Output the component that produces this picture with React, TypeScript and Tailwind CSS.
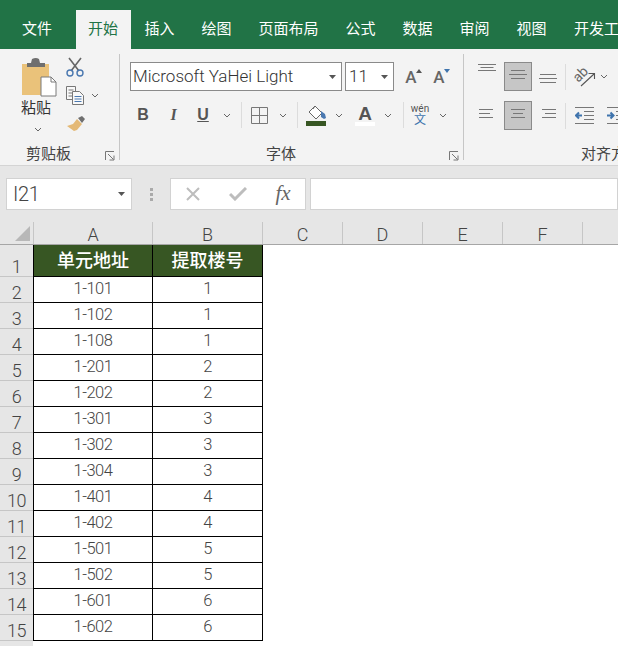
const font = { fontFamily: 'Roboto, "Noto Sans CJK SC", sans-serif' }

const rows = [
  ['1-101', '1'],
  ['1-102', '1'],
  ['1-108', '1'],
  ['1-201', '2'],
  ['1-202', '2'],
  ['1-301', '3'],
  ['1-302', '3'],
  ['1-304', '3'],
  ['1-401', '4'],
  ['1-402', '4'],
  ['1-501', '5'],
  ['1-502', '5'],
  ['1-601', '6'],
  ['1-602', '6'],
]

const tabs = [
  { label: '插入', w: 'w-[57px]' },
  { label: '绘图', w: 'w-[57px]' },
  { label: '页面布局', w: 'w-[87px]' },
  { label: '公式', w: 'w-[57px]' },
  { label: '数据', w: 'w-[57px]' },
  { label: '审阅', w: 'w-[57px]' },
  { label: '视图', w: 'w-[57px]' },
]

function Chevron() {
  return (
    <svg width="8" height="5" viewBox="0 0 8 5" fill="none" stroke="#666" strokeWidth="1" className="shrink-0">
      <path d="M1 1l3 3 3-3" />
    </svg>
  )
}

function Caret() {
  return (
    <svg width="7" height="4" viewBox="0 0 7 4" fill="#555">
      <path d="M0 0h7L3.5 4z" />
    </svg>
  )
}

function Launcher() {
  return (
    <svg width="10" height="10" viewBox="0 0 10 10" fill="none" stroke="#777" strokeWidth="1">
      <path d="M.5 9V.5H9" />
      <path d="M3 3l5.5 5.5M9 4.5v4.5H4.5" />
    </svg>
  )
}

function Cell({ w, children }: { w: string; children?: React.ReactNode }) {
  return <div className={`${w} h-full shrink-0 flex items-center justify-center`}>{children}</div>
}

function Sep() {
  return <div className="w-px h-[26px] shrink-0 bg-[#dcdcdc]" />
}

function AlignLines({ widths, side, gap = 4 }: { widths: number[]; side: 'left' | 'center' | 'right'; gap?: number }) {
  const total = 20
  return (
    <svg width="20" height="13" viewBox="0 0 20 13" stroke="#777" strokeWidth="1">
      {widths.map((w, i) => {
        const x = side === 'left' ? 2 : side === 'right' ? total - w - 2 : (total - w) / 2
        return <path key={i} d={`M${x} ${i * gap + 0.5}h${w}`} />
      })}
    </svg>
  )
}

function Paste() {
  return (
    <svg width="36" height="40" viewBox="0 0 36 40">
      <path d="M0 6h27v31H0z" fill="#eac27a" />
      <path d="M5 5h4l1-4q4-2 7 0l1 4h5v4H5z" fill="#6f6f6f" />
      <path d="M19 19h10l5 5v14H19z" fill="#fff" stroke="#7a7a7a" />
      <path d="M29 19v5h5" fill="none" stroke="#7a7a7a" />
    </svg>
  )
}

function Scissors() {
  return (
    <svg width="18" height="20" viewBox="0 0 18 20" fill="none">
      <path d="M3 1l10 13M15 1L5 14" stroke="#666" strokeWidth="1.6" />
      <circle cx="4" cy="16" r="3" stroke="#4a78b0" strokeWidth="1.4" />
      <circle cx="14" cy="16" r="3" stroke="#4a78b0" strokeWidth="1.4" />
    </svg>
  )
}

function Copy() {
  return (
    <svg width="18" height="19" viewBox="0 0 18 19" fill="#f8f8f8" stroke="#777" strokeWidth="1">
      <path d="M.5.5h9v13h-9z" />
      <path d="M2.5 4h5M2.5 7h5M2.5 10h5" />
      <path d="M6.5 5.5h7l4 4v9h-11z" />
      <path d="M8.5 10.5h7M8.5 13h7M8.5 15.5h7" stroke="#4a78b0" />
    </svg>
  )
}

function Brush() {
  return (
    <svg width="18" height="15" viewBox="0 0 18 15">
      <path d="M11 2l4-2 3 3-3 4z" fill="#6f6f6f" />
      <path d="M10 3l5 5-5 6-3 1-7-5 3-1 3-1z" fill="#e4b976" />
    </svg>
  )
}

function Borders() {
  return (
    <svg width="17" height="17" viewBox="0 0 17 17" fill="none" stroke="#777" strokeWidth="1">
      <path d="M.5.5h16v16H.5zM8.5.5v16M.5 8.5h16" />
    </svg>
  )
}

function FillColor() {
  return (
    <svg width="21" height="21" viewBox="0 0 21 21">
      <path d="M9 1l7 7-6 6-7-7z" fill="#fff" stroke="#666" />
      <path d="M9 1L7 4" stroke="#666" fill="none" />
      <path d="M15 6l4 3 1 4-2 1-3-2z" fill="#4a78b0" />
      <path d="M0 16h20v5H0z" fill="#375623" />
    </svg>
  )
}

function Orientation() {
  return (
    <svg width="22" height="22" viewBox="0 0 22 22" fill="none" className="ml-[2px]">
      <text x="0" y="13" fontSize="14" fill="#666" transform="rotate(-45 7 10)">ab</text>
      <path d="M7 20L20 8M14.5 7.5h6V13" stroke="#555" strokeWidth="1.1" />
    </svg>
  )
}

function Indent({ flip }: { flip?: boolean }) {
  return (
    <svg width="19" height="17" viewBox="0 0 19 17" fill="none" stroke="#777" strokeWidth="1" className="shrink-0">
      <path d="M0 .5h19M9 4.5h10M9 8.5h10M9 12.5h10M0 16.5h19" />
      {flip ? (
        <path d="M0 8.5h6M3.5 5.5l3 3-3 3" stroke="#3f74ad" strokeWidth="2" />
      ) : (
        <path d="M7 8.5H1M4 5.5l-3 3 3 3" stroke="#3f74ad" strokeWidth="2" />
      )}
    </svg>
  )
}

function RibbonGroup({ w, label, labelClass, launcher, children }: {
  w: string
  label: string
  labelClass: string
  launcher?: boolean
  children: React.ReactNode
}) {
  return (
    <section className={`${w} shrink-0 flex flex-col`}>
      <div className="flex-1 min-h-0">{children}</div>
      <div className="h-[20px] flex items-center relative text-[15px] text-[#444] whitespace-nowrap">
        <span className={labelClass}>{label}</span>
        {launcher && (
          <span className="absolute right-[4px] top-[7px] flex">
            <Launcher />
          </span>
        )}
      </div>
    </section>
  )
}

function SmallA({ up }: { up?: boolean }) {
  return (
    <span className="relative text-[17px] leading-[20px] text-[#666] font-medium">
      A
      <svg width="6" height="4" viewBox="0 0 6 4" className="absolute -right-[5px] top-[2px]" fill={up ? '#555' : '#3f74ad'}>
        <path d={up ? 'M3 0l3 4H0z' : 'M0 0h6L3 4z'} />
      </svg>
    </span>
  )
}

export default function App() {
  return (
    <div className="w-[618px] h-[646px] overflow-hidden bg-white flex flex-col" style={font}>
      {/* Tabs */}
      <div className="h-[49px] shrink-0 bg-[#217346] flex items-end text-[15px] text-white whitespace-nowrap">
        <div className="h-[39px] pl-[22px] w-[76px] shrink-0 flex items-center">文件</div>
        <div className="h-[39px] w-[55px] shrink-0 pl-[12px] bg-[#f3f3f3] text-[#217346] flex items-center">开始</div>
        {tabs.map((tab) => (
          <div key={tab.label} className={`${tab.w} h-[39px] shrink-0 flex items-center justify-center`}>
            {tab.label}
          </div>
        ))}
        <div className="h-[39px] pl-[14px] shrink-0 flex items-center">开发工具</div>
      </div>

      {/* Ribbon */}
      <div className="h-[117px] shrink-0 bg-[#f3f3f3] border-b border-[#d4d4d4] flex pt-[5px] pb-[1px]">
        <RibbonGroup w="w-[119px]" label="剪贴板" labelClass="ml-[26px]" launcher>
          <div className="flex h-full">
            <div className="w-[63px] pl-[22px] pt-[4px] flex flex-col">
              <Paste />
              <span className="w-[36px] -ml-[4px] text-[15px] leading-[20px] text-[#333] text-center">粘贴</span>
              <span className="w-[34px] mt-[9px] -ml-[1px] flex justify-center"><Chevron /></span>
            </div>
            <div className="flex flex-col -mt-[2px]">
              <div className="h-[29px] pl-[3px] flex items-center"><Scissors /></div>
              <div className="h-[28px] pl-[3px] flex items-center gap-[7px]"><Copy /><Chevron /></div>
              <div className="h-[28px] pl-[4px] flex items-center"><Brush /></div>
            </div>
          </div>
        </RibbonGroup>
        <div className="w-px h-[106px] bg-[#c6c6c6] shrink-0" />

        <RibbonGroup w="w-[343px]" label="字体" labelClass="ml-[146px]" launcher>
          <div className="pl-[10px] pt-[8px] flex items-center gap-[3px] h-[37px]">
            <div className="w-[212px] h-[29px] bg-white border border-[#8a8a8a] flex items-center justify-between pl-[2px] pr-[5px] pt-[1px] text-[17px] text-[#333] font-light">
              <span>Microsoft YaHei Light</span>
              <Caret />
            </div>
            <div className="w-[49px] h-[29px] bg-white border border-[#8a8a8a] flex items-center justify-between pl-[3px] pr-[5px] pt-[1px] text-[17px] text-[#333] font-light">
              <span>11</span>
              <Caret />
            </div>
            <div className="w-[28px] flex justify-center"><SmallA up /></div>
            <div className="w-[28px] -ml-[3px] flex justify-center"><SmallA /></div>
          </div>
          <div className="flex items-center h-[26px] mt-[11px] text-[16px] text-[#555]">
            <Cell w="w-[8px]" />
            <Cell w="w-[30px]"><b style={{ fontFamily: '"Liberation Sans", sans-serif' }}>B</b></Cell>
            <Cell w="w-[31px]"><b className="italic" style={{ fontFamily: '"Liberation Serif", serif' }}>I</b></Cell>
            <Cell w="w-[28px]"><b className="underline" style={{ fontFamily: '"Liberation Sans", sans-serif' }}>U</b></Cell>
            <Cell w="w-[20px]"><Chevron /></Cell>
            <Cell w="w-[4px]" />
            <Sep />
            <Cell w="w-[35px]"><Borders /></Cell>
            <Cell w="w-[12px]"><Chevron /></Cell>
            <Cell w="w-[8px]" />
            <Sep />
            <Cell w="w-[37px]"><FillColor /></Cell>
            <Cell w="w-[8px]"><Chevron /></Cell>
            <Cell w="w-[44px]">
              <span className="flex flex-col items-center leading-[17px]">
                <b className="text-[19px] text-[#555]" style={{ fontFamily: '"Liberation Sans", sans-serif' }}>A</b>
                <span className="w-[20px] h-[4px] bg-white" />
              </span>
            </Cell>
            <Cell w="w-[2px]"><Chevron /></Cell>
            <Cell w="w-[14px]" />
            <Sep />
            <Cell w="w-[32px]">
              <span className="flex flex-col items-center text-[10px] leading-[10px] text-[#555]">
                wén
                <span className="text-[12px] leading-[12px] text-[#3f74ad]">文</span>
              </span>
            </Cell>
            <Cell w="w-[14px]"><Chevron /></Cell>
          </div>
        </RibbonGroup>
        <div className="w-px h-[106px] bg-[#c6c6c6] shrink-0" />

        <RibbonGroup w="w-[200px]" label="对齐方式" labelClass="ml-[117px]">
          <div className="flex items-center pt-[8px] pl-[13px] h-[37px]">
            <Cell w="w-[20px]"><span className="-mt-[12px] flex"><AlignLines widths={[18, 13, 18]} side="center" gap={3} /></span></Cell>
            <Cell w="w-[7px]" />
            <div className="w-[28px] h-[29px] bg-[#c6c6c6] border border-[#8a8a8a] flex items-center justify-center">
              <AlignLines widths={[14, 18, 14]} side="center" />
            </div>
            <Cell w="w-[6px]" />
            <Cell w="w-[20px]"><span className="mt-[7px] flex"><AlignLines widths={[16, 18, 16]} side="center" /></span></Cell>
            <Cell w="w-[7px]" />
            <Sep />
            <Cell w="w-[36px]"><Orientation /></Cell>
            <Cell w="w-[3px]"><Chevron /></Cell>
          </div>
          <div className="flex items-center pl-[13px] h-[29px] mt-[10px]">
            <Cell w="w-[20px]"><AlignLines widths={[14, 11, 14]} side="left" /></Cell>
            <Cell w="w-[7px]" />
            <div className="w-[28px] h-[29px] bg-[#c6c6c6] border border-[#8a8a8a] flex items-center justify-center">
              <AlignLines widths={[14, 10, 14]} side="center" />
            </div>
            <Cell w="w-[6px]" />
            <Cell w="w-[20px]"><AlignLines widths={[14, 11, 14]} side="right" /></Cell>
            <Cell w="w-[7px]" />
            <Sep />
            <Cell w="w-[36px]"><Indent /></Cell>
            <Cell w="w-[19px]"><span className="ml-[10px] flex"><Indent flip /></span></Cell>
          </div>
        </RibbonGroup>
      </div>

      {/* Formula bar */}
      <div className="h-[56px] shrink-0 bg-[#e6e6e6] flex items-start pt-[12px] pl-[6px]">
        <div className="w-[126px] h-[32px] bg-white border border-[#d2d2d2] flex items-center justify-between pl-[6px] pr-[6px] text-[20px] tracking-[-0.3px] text-[#444] font-light">
          <span>I21</span>
          <Caret />
        </div>
        <div className="w-[38px] h-[32px] flex flex-col items-center justify-center gap-[2px]">
          <span className="w-[3px] h-[3px] bg-[#aaa]" />
          <span className="w-[3px] h-[3px] bg-[#aaa]" />
          <span className="w-[3px] h-[3px] bg-[#aaa]" />
        </div>
        <div className="w-[136px] h-[32px] bg-white border border-[#d2d2d2] flex items-center">
          <Cell w="w-[44px]">
            <svg width="16" height="16" viewBox="0 0 16 16" fill="none" stroke="#bdbdbd" strokeWidth="2">
              <path d="M2 2l12 12M14 2L2 14" />
            </svg>
          </Cell>
          <Cell w="w-[46px]">
            <svg width="18" height="14" viewBox="0 0 18 14" fill="none" stroke="#bdbdbd" strokeWidth="3">
              <path d="M1 7l5 5L17 1" />
            </svg>
          </Cell>
          <Cell w="w-[44px]">
            <span className="text-[21px] italic text-[#666]" style={{ fontFamily: '"Liberation Serif", serif' }}>fx</span>
          </Cell>
        </div>
        <div className="w-[308px] h-[32px] ml-[4px] bg-white border border-[#d2d2d2]" />
      </div>

      {/* Column headers */}
      <div className="h-[23px] shrink-0 bg-[#e6e6e6] border-b border-[#a6a6a6] flex text-[18px] leading-[25px] text-[#444] font-light">
        <div className="w-[34px] shrink-0 pl-[15px] pt-[4px] border-r border-[#c6c6c6]">
          <svg width="15" height="15" viewBox="0 0 15 15" fill="#b8b8b8">
            <path d="M15 0v15H0z" />
          </svg>
        </div>
        <div className="w-[119px] shrink-0 text-center border-r border-[#c6c6c6]">A</div>
        <div className="w-[110px] shrink-0 text-center border-r border-[#c6c6c6]">B</div>
        <div className="w-[80px] shrink-0 text-center border-r border-[#c6c6c6]">C</div>
        <div className="w-[80px] shrink-0 text-center border-r border-[#c6c6c6]">D</div>
        <div className="w-[80px] shrink-0 text-center border-r border-[#c6c6c6]">E</div>
        <div className="w-[80px] shrink-0 text-center border-r border-[#c6c6c6]">F</div>
      </div>

      {/* Sheet */}
      <div className="flex-1 min-h-0 overflow-hidden">
        <div className="flex h-[32px]">
          <div className="w-[33px] shrink-0 bg-[#e6e6e6] border-b border-[#c6c6c6] flex items-end justify-center text-[18px] leading-[18px] tracking-[-0.5px] text-[#444] font-light">1</div>
          <div className="w-[230px] shrink-0 grid grid-cols-[119px_110px] bg-[#375623] text-white text-[18px] font-medium border-b border-l border-black">
            <div className="border-r border-black flex items-center justify-center pb-[1px]">单元地址</div>
            <div className="border-r border-black flex items-center justify-center pb-[1px]">提取楼号</div>
          </div>
        </div>
        {rows.map((row, i) => (
          <div key={i} className="flex h-[26px]">
            <div className="w-[33px] shrink-0 bg-[#e6e6e6] border-b border-[#c6c6c6] flex items-end justify-center text-[18px] leading-[18px] tracking-[-0.5px] text-[#444] font-light">{i + 2}</div>
            <div className="w-[230px] shrink-0 grid grid-cols-[119px_110px] text-[16.5px] leading-[20px] tracking-[-0.5px] text-[#444] font-light border-b border-l border-black">
              <div className="border-r border-black flex items-center justify-center pb-[2px]">{row[0]}</div>
              <div className="border-r border-black flex items-center justify-center pb-[2px]">{row[1]}</div>
            </div>
          </div>
        ))}
        <div className="w-[33px] h-[5px] bg-[#e6e6e6]" />
      </div>
    </div>
  )
}
